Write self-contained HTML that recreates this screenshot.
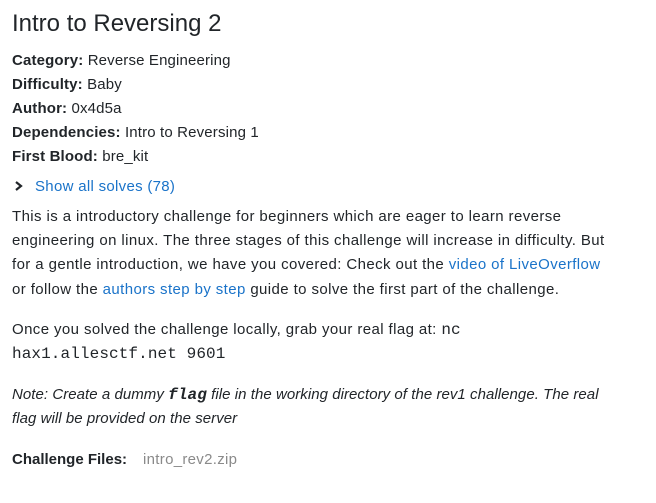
<!DOCTYPE html>
<html><head><meta charset="utf-8"><style>
body{margin:0;background:#fff;color:#212529;font-family:"Liberation Sans",sans-serif;font-size:15px;width:656px;height:503px;overflow:hidden}
.l{position:absolute;left:12px;white-space:nowrap;line-height:24px}
.p{letter-spacing:0.4px}
h1{position:absolute;left:12px;top:9px;margin:0;font-weight:400;font-size:24px;line-height:30px;color:#212529}
b{font-weight:700}
a{color:#1a73c9;text-decoration:none}
code{font-family:"Liberation Mono",monospace;font-size:16px;letter-spacing:0.1px}
i{font-style:italic}
</style></head><body>
<h1>Intro to Reversing 2</h1>
<div class="l" style="top:49px;letter-spacing:0.15px"><b>Category:</b> Reverse Engineering</div>
<div class="l" style="top:73px;letter-spacing:0.15px"><b>Difficulty:</b> Baby</div>
<div class="l" style="top:97px;letter-spacing:0.15px"><b>Author:</b> 0x4d5a</div>
<div class="l" style="top:121px;letter-spacing:0.15px"><b>Dependencies:</b> Intro to Reversing 1</div>
<div class="l" style="top:145px;letter-spacing:0.15px"><b>First Blood:</b> bre_kit</div>
<div class="l" style="top:175px"><svg width="10" height="12" style="position:relative;top:1px;margin-right:11px;margin-left:2px" viewBox="0 0 10 12"><path d="M2 2l5 4-5 4" fill="none" stroke="#212529" stroke-width="2.2"/></svg><a style="letter-spacing:0.3px">Show all solves (78)</a></div>
<div class="l p" style="top:205px">This is a introductory challenge for beginners which are eager to learn reverse</div>
<div class="l p" style="top:229px">engineering on linux. The three stages of this challenge will increase in difficulty. But</div>
<div class="l p" style="top:253px">for a gentle introduction, we have you covered: Check out the <a>video of LiveOverflow</a></div>
<div class="l p" style="top:278px">or follow the <a>authors step by step</a> guide to solve the first part of the challenge.</div>
<div class="l p" style="top:318px">Once you solved the challenge locally, grab your real flag at: <code>nc</code></div>
<div class="l" style="top:342px"><code>hax1.allesctf.net 9601</code></div>
<div class="l" style="top:383px;letter-spacing:0.05px"><i>Note: Create a dummy <code><b>flag</b></code> file in the working directory of the rev1 challenge. The real</i></div>
<div class="l" style="top:407px;letter-spacing:0.05px"><i>flag will be provided on the server</i></div>
<div class="l" style="top:448px"><b>Challenge Files:</b><span style="color:#8a8a8a;margin-left:16px;letter-spacing:0.3px">intro_rev2.zip</span></div>
</body></html>
